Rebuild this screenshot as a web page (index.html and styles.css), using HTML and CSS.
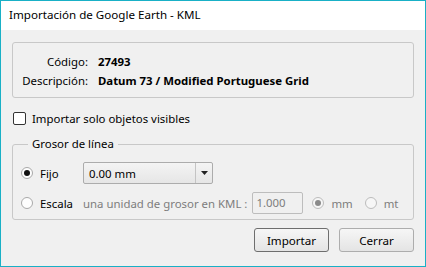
FILE: index.html
```
<!DOCTYPE html>
<html lang="es">
<head>
<meta charset="utf-8">
<title>Importación de Google Earth - KML</title>
<link rel="stylesheet" href="styles.css">
</head>
<body>
<div class="window">
  <div class="titlebar">Importación de Google Earth - KML</div>
  <div class="content">
    <div class="info">
      <span class="lbl">Código:</span><span class="val">27493</span>
      <span class="lbl">Descripción:</span><span class="val">Datum 73 / Modified Portuguese Grid</span>
    </div>
    <label class="check-row"><span class="checkbox"></span><span>Importar solo objetos visibles</span></label>
    <fieldset class="group">
      <legend>Grosor de línea</legend>
      <div class="row">
        <span class="opt"><span class="radio on"></span><span>Fijo</span></span>
        <div class="combo"><span class="combo-text">0.00 mm</span><span class="combo-arrow"><svg width="7" height="4" viewBox="0 0 7 4"><path d="M0 0h7L3.5 4z" fill="#222"/></svg></span></div>
      </div>
      <div class="row">
        <span class="opt"><span class="radio"></span><span>Escala</span></span>
        <span class="dim">una unidad de grosor en KML :</span>
        <span class="input">1.000</span>
        <span class="opt2"><span class="radio dis-on"></span><span class="dim">mm</span></span>
        <span class="opt2"><span class="radio dis"></span><span class="dim">mt</span></span>
      </div>
    </fieldset>
    <div class="buttons">
      <button class="btn default">Importar</button>
      <button class="btn">Cerrar</button>
    </div>
  </div>
</div>
</body>
</html>
```
FILE: styles.css
```
html, body { margin: 0; padding: 0; background: #f0f0f0; }
body {
  font-family: "Noto Sans", "Liberation Sans", sans-serif;
  font-size: 11.4px;
  color: #000;
}
.window {
  width: 426px;
  height: 267px;
  box-sizing: border-box;
  border: 1px solid #19b0c6;
  background: #f0f0f0;
  display: flex;
  flex-direction: column;
}
.titlebar {
  height: 29px;
  line-height: 28px;
  background: #fff;
  padding-left: 8px;
  font-size: 11.6px;
  color: #000;
}
.content {
  padding: 12px 11px 0 11px;
  display: flex;
  flex-direction: column;
}
.info {
  height: 56px;
  box-sizing: border-box;
  border: 1px solid #c8c8c8;
  border-radius: 3px;
  padding: 9px 0;
  display: grid;
  grid-template-columns: 75px 1fr;
  grid-auto-rows: 19px;
  column-gap: 10px;
  align-items: center;
}
.lbl { text-align: right; }
.val { font-weight: bold; }
.check-row {
  margin-top: 14px;
  display: flex;
  align-items: center;
  gap: 6px;
  height: 13px;
  margin-left: 1px;
}
.checkbox {
  width: 11px;
  height: 11px;
  border: 1px solid #333;
  border-radius: 2px;
  background: #fff;
}
.group {
  margin: 11px 0 0 0;
  border: 1px solid #c8c8c8;
  border-radius: 3px;
  padding: 10px 0 5px 8px;
  min-width: 0;
}
.group legend {
  padding: 0 4px;
  margin-left: 7px;
  line-height: 16px;
}
.row {
  display: flex;
  align-items: center;
  height: 22px;
}
.row + .row { margin-top: 8px; }
.opt {
  width: 62px;
  display: flex;
  align-items: center;
  gap: 7px;
}
.opt2 {
  display: flex;
  align-items: center;
  gap: 7px;
}
.radio {
  width: 10px;
  height: 10px;
  border: 1px solid #a9a9a9;
  border-radius: 50%;
  background: #fdfdfd;
  position: relative;
  flex: none;
}
.radio.on::after, .radio.dis-on::after {
  content: "";
  position: absolute;
  left: 2px; top: 2px;
  width: 6px; height: 6px;
  border-radius: 50%;
  background: #111;
}
.radio.dis-on::after { background: #8a8a8a; }
.radio.dis, .radio.dis-on { border-color: #bcbcbc; background: #f6f6f6; }
.combo {
  width: 130px;
  height: 22px;
  box-sizing: border-box;
  border: 1px solid #acacac;
  border-radius: 2px;
  background: linear-gradient(#f4f4f4, #e6e6e6);
  display: flex;
  align-items: center;
}
.combo-text { flex: 1; padding-left: 5px; }
.combo-arrow {
  width: 16px;
  height: 20px;
  border-left: 1px solid #c4c4c4;
  display: flex;
  align-items: center;
  justify-content: center;
}
.combo-arrow svg { display: block; }
.dim { color: #7d7d7d; }
.input {
  margin-left: 5px;
  width: 51px;
  height: 22px;
  box-sizing: border-box;
  border: 1px solid #bdbdbd;
  border-radius: 2px;
  color: #7d7d7d;
  padding-left: 3px;
  line-height: 20px;
  margin-right: 9px;
}
.opt2 + .opt2 { margin-left: 12px; }
.buttons {
  margin-top: 8px;
  display: flex;
  justify-content: flex-end;
  gap: 10px;
}
.btn {
  width: 75px;
  height: 24px;
  box-sizing: border-box;
  border: 1px solid #adadad;
  border-radius: 3px;
  background: linear-gradient(#f6f6f6, #e4e4e4);
  font-family: inherit;
  font-size: 11.6px;
  color: #000;
  padding: 0;
}
.btn.default { border-color: #6e6e6e; }
```
